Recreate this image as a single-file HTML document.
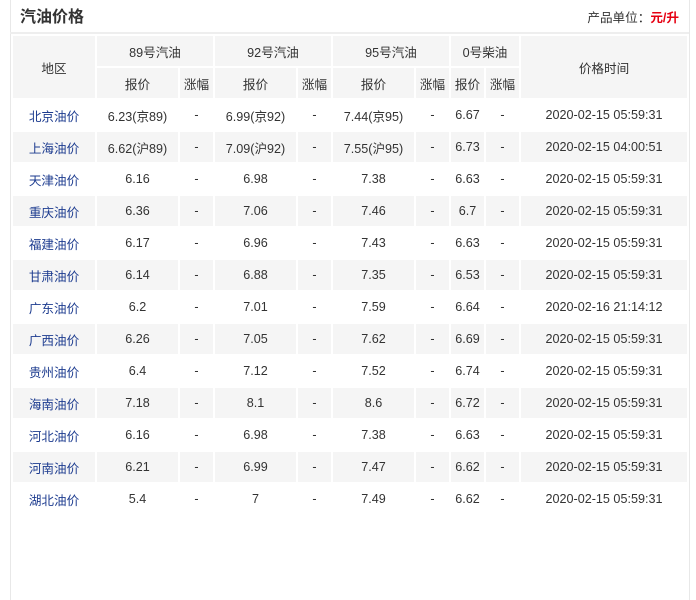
<!DOCTYPE html>
<html><head><meta charset="utf-8"><style>
body{margin:0;width:696px;height:515px;overflow:hidden;background:#fff;font-family:"Liberation Sans","Noto Sans CJK SC",sans-serif;color:#333;font-size:12.6px;position:relative}
.box{position:absolute;left:10px;top:0;width:678px;height:600px;border-left:1px solid #e8e8e8;border-right:1px solid #e8e8e8}
.hd{position:absolute;left:10px;top:0;width:679px;height:32px;border-bottom:2px solid #eee}
.t{position:absolute;left:10px;top:3px;font-size:16px;font-weight:bold;color:#333}
.u{position:absolute;right:10px;top:7px;font-size:12.6px}
.u b{color:#e60012}
table{position:absolute;left:11px;top:34px;border-collapse:separate;border-spacing:2px;table-layout:fixed;font-size:12.6px}
td{text-align:center;padding:0;height:30px;white-space:nowrap}
thead td{background:#f5f5f5}
tbody tr:nth-child(even) td{background:#f5f5f5}
td.n{color:#1c3b8f}
</style></head><body>
<div class="box"></div>
<div class="hd"><div class="t">汽油价格</div><div class="u">产品单位：<b>元/升</b></div></div>
<table>
<colgroup><col style="width:82px"><col style="width:81px"><col style="width:33px"><col style="width:81px"><col style="width:33px"><col style="width:81px"><col style="width:33px"><col style="width:33px"><col style="width:33px"><col style="width:166px"></colgroup>
<thead>
<tr><td rowspan="2">地区</td><td colspan="2">89号汽油</td><td colspan="2">92号汽油</td><td colspan="2">95号汽油</td><td colspan="2">0号柴油</td><td rowspan="2">价格时间</td></tr>
<tr><td>报价</td><td>涨幅</td><td>报价</td><td>涨幅</td><td>报价</td><td>涨幅</td><td>报价</td><td>涨幅</td></tr>
</thead>
<tbody>
<tr><td class="n">北京油价</td><td>6.23(京89)</td><td>-</td><td>6.99(京92)</td><td>-</td><td>7.44(京95)</td><td>-</td><td>6.67</td><td>-</td><td>2020-02-15 05:59:31</td></tr>
<tr><td class="n">上海油价</td><td>6.62(沪89)</td><td>-</td><td>7.09(沪92)</td><td>-</td><td>7.55(沪95)</td><td>-</td><td>6.73</td><td>-</td><td>2020-02-15 04:00:51</td></tr>
<tr><td class="n">天津油价</td><td>6.16</td><td>-</td><td>6.98</td><td>-</td><td>7.38</td><td>-</td><td>6.63</td><td>-</td><td>2020-02-15 05:59:31</td></tr>
<tr><td class="n">重庆油价</td><td>6.36</td><td>-</td><td>7.06</td><td>-</td><td>7.46</td><td>-</td><td>6.7</td><td>-</td><td>2020-02-15 05:59:31</td></tr>
<tr><td class="n">福建油价</td><td>6.17</td><td>-</td><td>6.96</td><td>-</td><td>7.43</td><td>-</td><td>6.63</td><td>-</td><td>2020-02-15 05:59:31</td></tr>
<tr><td class="n">甘肃油价</td><td>6.14</td><td>-</td><td>6.88</td><td>-</td><td>7.35</td><td>-</td><td>6.53</td><td>-</td><td>2020-02-15 05:59:31</td></tr>
<tr><td class="n">广东油价</td><td>6.2</td><td>-</td><td>7.01</td><td>-</td><td>7.59</td><td>-</td><td>6.64</td><td>-</td><td>2020-02-16 21:14:12</td></tr>
<tr><td class="n">广西油价</td><td>6.26</td><td>-</td><td>7.05</td><td>-</td><td>7.62</td><td>-</td><td>6.69</td><td>-</td><td>2020-02-15 05:59:31</td></tr>
<tr><td class="n">贵州油价</td><td>6.4</td><td>-</td><td>7.12</td><td>-</td><td>7.52</td><td>-</td><td>6.74</td><td>-</td><td>2020-02-15 05:59:31</td></tr>
<tr><td class="n">海南油价</td><td>7.18</td><td>-</td><td>8.1</td><td>-</td><td>8.6</td><td>-</td><td>6.72</td><td>-</td><td>2020-02-15 05:59:31</td></tr>
<tr><td class="n">河北油价</td><td>6.16</td><td>-</td><td>6.98</td><td>-</td><td>7.38</td><td>-</td><td>6.63</td><td>-</td><td>2020-02-15 05:59:31</td></tr>
<tr><td class="n">河南油价</td><td>6.21</td><td>-</td><td>6.99</td><td>-</td><td>7.47</td><td>-</td><td>6.62</td><td>-</td><td>2020-02-15 05:59:31</td></tr>
<tr><td class="n">湖北油价</td><td>5.4</td><td>-</td><td>7</td><td>-</td><td>7.49</td><td>-</td><td>6.62</td><td>-</td><td>2020-02-15 05:59:31</td></tr>
</tbody>
</table>
</body></html>
